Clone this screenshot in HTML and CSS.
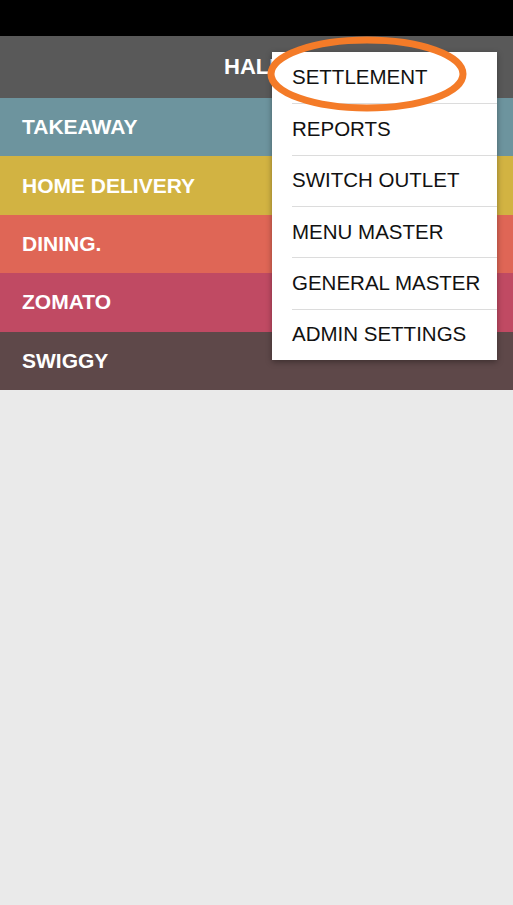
FILE: index.html
```html
<!DOCTYPE html>
<html>
<head>
<meta charset="utf-8">
<link rel="stylesheet" href="styles.css">
</head>
<body>
<div class="screen">
  <div class="statusbar"></div>
  <div class="header"><span class="title">HALDIRAM</span></div>
  <div class="rows">
    <div class="row takeaway">TAKEAWAY</div>
    <div class="row delivery">HOME DELIVERY</div>
    <div class="row dining">DINING.</div>
    <div class="row zomato">ZOMATO</div>
    <div class="row swiggy">SWIGGY</div>
  </div>
  <div class="menu">
    <div class="item">SETTLEMENT</div>
    <div class="item">REPORTS</div>
    <div class="item">SWITCH OUTLET</div>
    <div class="item">MENU MASTER</div>
    <div class="item">GENERAL MASTER</div>
    <div class="item">ADMIN SETTINGS</div>
  </div>
  <svg class="circle" width="210" height="84" viewBox="0 0 210 84">
    <ellipse cx="105" cy="38" rx="96" ry="34" fill="none" stroke="#f47b28" stroke-width="7"/>
  </svg>
</div>
</body>
</html>
```
FILE: styles.css
```css
html, body { margin: 0; padding: 0; }
body { background: #eaeaea; width: 513px; height: 905px; overflow: hidden; }
.screen { position: relative; width: 513px; height: 905px; background: #eaeaea; }
.statusbar { height: 36px; background: #000; }
.header {
  height: 62px; background: #595959;
  display: flex; align-items: center; padding-left: 224px;
}
.title { color: #fff; font: bold 22px "Liberation Sans", Arial, sans-serif; }
.rows { display: flex; flex-direction: column; }
.row {
  height: 58.4px; display: flex; align-items: center; padding-left: 22px;
  color: #fff; font: bold 21px "Liberation Sans", Arial, sans-serif;
}
.takeaway { background: #6d949e; }
.delivery { background: #d2b342; }
.dining { background: #df6656; }
.zomato { background: #c04a63; }
.swiggy { background: #5e4849; }
.menu {
  position: absolute; top: 52px; left: 272px; width: 225px;
  background: #fff; box-shadow: 0 2px 6px rgba(0,0,0,0.35);
  display: flex; flex-direction: column;
}
.item {
  height: 51.33px; margin-left: 20px; box-sizing: border-box;
  display: flex; align-items: center; padding-bottom: 1px;
  font: 20.5px "Liberation Sans", Arial, sans-serif; color: #111;
  border-top: 1px solid #dcdcdc;
}
.item:first-child { border-top: none; }
.circle { position: absolute; left: 262px; top: 36px; }
```
